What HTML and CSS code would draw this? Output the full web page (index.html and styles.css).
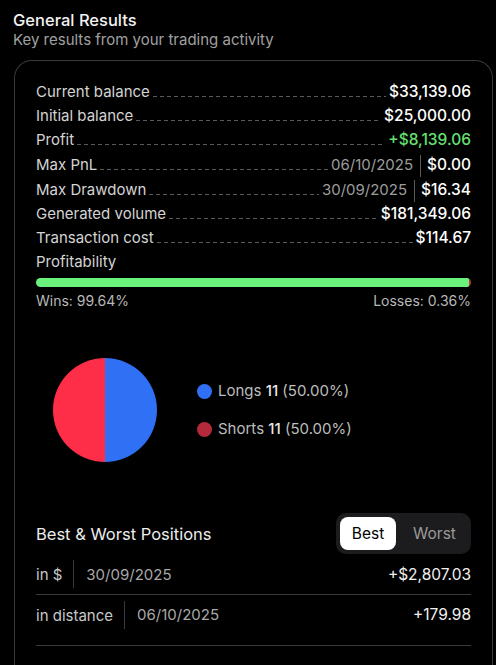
FILE: index.html
```html
<!DOCTYPE html>
<html>
<head>
<meta charset="utf-8">
<link rel="stylesheet" href="styles.css">
</head>
<body>
<div class="header">
  <div class="title">General Results</div>
  <div class="subtitle">Key results from your trading activity</div>
</div>
<div class="card">
  <div class="row"><span class="label">Current balance</span><span class="leader"></span><span class="value">$33,139.06</span></div>
  <div class="row"><span class="label">Initial balance</span><span class="leader"></span><span class="value">$25,000.00</span></div>
  <div class="row"><span class="label">Profit</span><span class="leader"></span><span class="value green">+$8,139.06</span></div>
  <div class="row tall"><span class="label">Max PnL</span><span class="leader"></span><span class="date">06/10/2025</span><span class="vsep"></span><span class="value">$0.00</span></div>
  <div class="row tall"><span class="label">Max Drawdown</span><span class="leader"></span><span class="date">30/09/2025</span><span class="vsep"></span><span class="value">$16.34</span></div>
  <div class="row"><span class="label">Generated volume</span><span class="leader"></span><span class="value">$181,349.06</span></div>
  <div class="row"><span class="label">Transaction cost</span><span class="leader"></span><span class="value">$114.67</span></div>
  <div class="row"><span class="label">Profitability</span></div>
  <div class="bar"><div class="bar-win" style="width:99.64%"></div><div class="bar-loss"></div></div>
  <div class="winloss"><span>Wins: 99.64%</span><span>Losses: 0.36%</span></div>

  <div class="chart">
    <svg class="pie" width="104" height="104" viewBox="0 0 104 104">
      <path d="M52 0 A52 52 0 0 0 52 104 Z" fill="#fe2d48"/>
      <path d="M52 0 A52 52 0 0 1 52 104 Z" fill="#3070f5"/>
    </svg>
    <div class="legend">
      <div class="legend-item"><span class="dot blue"></span><span>Longs <b>11</b> (50.00%)</span></div>
      <div class="legend-item"><span class="dot red"></span><span>Shorts <b>11</b> (50.00%)</span></div>
    </div>
  </div>

  <div class="bw-head">
    <div class="bw-title">Best &amp; Worst Positions</div>
    <div class="seg"><span class="seg-item active">Best</span><span class="seg-item">Worst</span></div>
  </div>
  <div class="pos-row"><span class="pos-label">in $</span><span class="pos-date">30/09/2025</span><span class="pos-value">+$2,807.03</span></div>
  <div class="pos-row last"><span class="pos-label">in distance</span><span class="pos-date">06/10/2025</span><span class="pos-value">+179.98</span></div>
</div>
</body>
</html>
```
FILE: styles.css
```css
* { box-sizing: border-box; }
html, body { margin: 0; padding: 0; background: #000; }
body {
  font-family: Inter, "Liberation Sans", sans-serif;
  color: #fff;
  overflow: hidden;
  height: 665px;
}
.header { padding: 10px 0 0 13px; }
.title { font-size: 16.5px; line-height: 20px; font-weight: 500; color: #f2f2f2; }
.subtitle { font-size: 15px; line-height: 20px; color: #a0a0a0; margin-top: 0; }
.card {
  margin: 10px 3px 0 14px;
  border: 1px solid #3a3a3c;
  border-bottom: none;
  border-radius: 18px 18px 0 0;
  padding: 20px 21px 19px 21px;
}
.row {
  display: flex;
  align-items: flex-end;
  height: 24px;
  padding-bottom: 4px;
}
.row.tall { height: 25px; }
.label { font-size: 15px; line-height: 18px; color: #d4d4d4; white-space: nowrap; }
.leader {
  flex: 1;
  height: 1px;
  margin: 0 3px 4px 3px;
  background: repeating-linear-gradient(to right, #5a5a5a 0 4px, transparent 4px 7px);
}
.value { font-size: 15.5px; line-height: 18px; font-weight: 500; color: #fff; white-space: nowrap; }
.value.green { color: #67e071; }
.date { font-size: 15px; line-height: 18px; color: #9c9c9c; }
.vsep { width: 1px; height: 22px; background: #5a5a5a; margin: 0 6px -3px 7px; align-self: flex-end; }
.bar {
  display: flex;
  height: 9px;
  border-radius: 5px;
  overflow: hidden;
  margin-top: 3px;
}
.bar-win { background: #6bf27c; }
.bar-loss { flex: 1; background: #c0352c; }
.winloss {
  display: flex;
  justify-content: space-between;
  font-size: 14px;
  line-height: 16px;
  color: #b8b8b8;
  margin-top: 6px;
}
.chart {
  display: flex;
  align-items: center;
  margin-top: 49px;
  padding-left: 17px;
}
.pie { display: block; }
.legend { margin-left: 40px; display: flex; flex-direction: column; gap: 20px; }
.legend-item { display: flex; align-items: center; font-size: 15px; line-height: 18px; color: #bdbdbd; }
.legend-item b { font-weight: 500; color: #e8e8e8; }
.dot { width: 15px; height: 15px; border-radius: 50%; margin-right: 6px; }
.dot.blue { background: #3070f5; }
.dot.red { background: #b32b3b; }
.bw-head {
  display: flex;
  justify-content: space-between;
  align-items: center;
  margin-top: 51px;
}
.bw-title { font-size: 16.5px; line-height: 20px; color: #ececec; }
.seg {
  display: flex;
  background: #1c1c1e;
  border-radius: 10px;
  padding: 4px;
  width: 135px;
  height: 41px;
}
.seg-item {
  flex: 1;
  display: flex;
  align-items: center;
  justify-content: center;
  font-size: 15.5px;
  color: #9a9a9a;
  border-radius: 8px;
}
.seg-item.active { background: #fff; color: #000; flex: 0 0 56px; }
.seg-item + .seg-item { margin-left: 6px; }
.pos-row {
  display: flex;
  align-items: center;
  height: 41px;
  border-bottom: 1px solid #3a3a3c;
  font-size: 15px;
}
.pos-row.last {
  height: 51px;
  align-items: flex-start;
  padding-top: 6px;
}
.pos-label {
  color: #c8c8c8;
  padding-right: 11px;
  border-right: 1px solid #3a3a3c;
  height: 28px;
  display: flex;
  align-items: center;
}
.pos-row.last .pos-date, .pos-row.last .pos-value { line-height: 28px; }
.pos-date { color: #a8a8a8; padding-left: 12px; flex: 1; }
.pos-value { color: #f0f0f0; font-size: 15.5px; }
```
